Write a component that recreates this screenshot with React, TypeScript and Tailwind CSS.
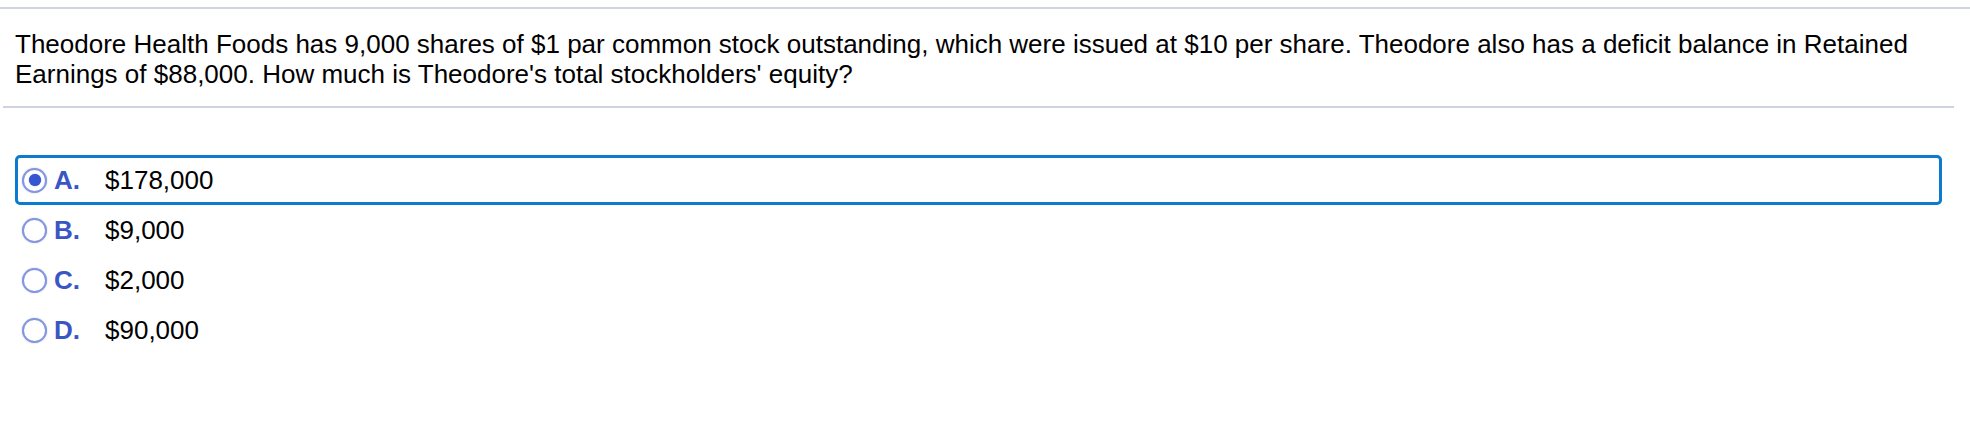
import { useState } from "react"

const options = [
  { key: "A", value: "$178,000" },
  { key: "B", value: "$9,000" },
  { key: "C", value: "$2,000" },
  { key: "D", value: "$90,000" },
]

function Radio({ checked }: { checked: boolean }) {
  return (
    <span className="flex h-[25px] w-[25px] shrink-0 items-center justify-center rounded-full border-[2.5px] border-[#8396de] bg-white shadow-[0_0_1.5px_#a7b4ea]">
      {checked && <span className="h-[12px] w-[12px] rounded-full bg-[#3556d0] shadow-[0_0_1px_#3556d0]" />}
    </span>
  )
}

export default function App() {
  const [selected, setSelected] = useState("A")

  return (
    <div className="h-[440px] w-[1970px] bg-white font-['Liberation_Sans',Arial,sans-serif] text-black">
      <div className="pt-[7px]">
        <div className="h-[2px] bg-[#cfd2df]" />
      </div>

      <p className="ml-[15px] mt-[20px] text-[26px] leading-[30px]">
        Theodore Health Foods has 9,000 shares of $1 par common stock outstanding, which were issued at $10 per share. Theodore also has a deficit balance in Retained
        <br />
        Earnings of $88,000. How much is Theodore&apos;s total stockholders&apos; equity?
      </p>

      <div className="ml-[3px] mt-[17px] h-[2px] w-[1951px] bg-[#cfd2df]" />

      {/* answer choices */}
      <div className="ml-[15px] mt-[47px] flex flex-col">
        {options.map((o) => (
          <div
            key={o.key}
            onClick={() => setSelected(o.key)}
            className={
              selected === o.key
                ? "flex h-[50px] w-[1927px] cursor-pointer items-center rounded-[5px] border-[3px] border-[#0b7bcf] pl-[4px]"
                : "flex h-[50px] w-[1927px] cursor-pointer items-center rounded-[5px] border-[3px] border-transparent pl-[4px]"
            }
          >
            <Radio checked={selected === o.key} />
            <span className="ml-[7px] w-[51px] text-[26px] font-bold text-[#3a56c5]">{o.key}.</span>
            <span className="text-[26px]">{o.value}</span>
          </div>
        ))}
      </div>
    </div>
  )
}
